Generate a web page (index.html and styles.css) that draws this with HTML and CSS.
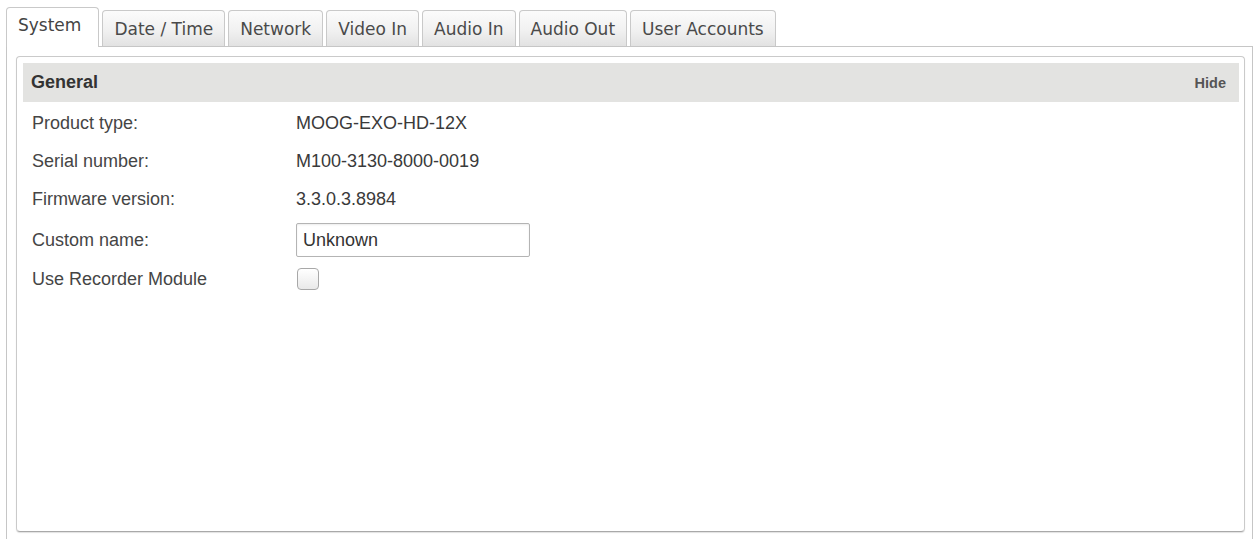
FILE: index.html
```html
<!DOCTYPE html>
<html lang="en">
<head>
  <meta charset="UTF-8" />
  <meta name="viewport" content="width=device-width, initial-scale=1.0" />
  <title>Device Settings - System</title>
  <link rel="stylesheet" href="styles.css">
</head>
<body>
  <div class="page">
    <ul class="tabs">
      <li class="tab active">System</li>
      <li class="tab">Date / Time</li>
      <li class="tab">Network</li>
      <li class="tab">Video In</li>
      <li class="tab">Audio In</li>
      <li class="tab">Audio Out</li>
      <li class="tab">User Accounts</li>
    </ul>

    <div class="panel">
      <div class="section">
        <div class="section-head">
          <span class="section-title">General</span>
          <span class="section-toggle">Hide</span>
        </div>

        <div class="rows">
          <div class="row">
            <span class="label">Product type:</span>
            <span class="value">MOOG-EXO-HD-12X</span>
          </div>
          <div class="row">
            <span class="label">Serial number:</span>
            <span class="value">M100-3130-8000-0019</span>
          </div>
          <div class="row">
            <span class="label">Firmware version:</span>
            <span class="value">3.3.0.3.8984</span>
          </div>
          <div class="row row-input">
            <span class="label">Custom name:</span>
            <input type="text" class="text-field" value="Unknown" />
          </div>
          <div class="row row-check">
            <span class="label">Use Recorder Module</span>
            <span class="check"></span>
          </div>
        </div>
      </div>
    </div>
  </div>
</body>
</html>
```

FILE: styles.css
```css
* {
  box-sizing: border-box;
}

html,
body {
  height: 100%;
  overflow: hidden;
}

body {
  margin: 0;
  background-color: #ffffff;
  font-family: "Liberation Sans", Arial, sans-serif;
  color: #333333;
}

.page {
  padding: 7px 6px 0 6px;
}

/* tab strip */
.tabs {
  display: flex;
  align-items: flex-end;
  gap: 3px;
  height: 39px;
  margin: 0;
  padding: 0;
  list-style: none;
  position: relative;
  z-index: 1;
}

.tab {
  height: 36px;
  padding: 0 11px;
  display: flex;
  align-items: center;
  border: 1px solid #c9c9c9;
  border-bottom: none;
  border-radius: 4px 4px 0 0;
  background: linear-gradient(#fbfbfb, #f1f1f1 55%, #e2e2e2);
  font-family: "DejaVu Sans", Verdana, sans-serif;
  font-size: 17px;
  color: #4a4a4a;
  white-space: nowrap;
}

.tab.active {
  height: 40px;
  margin-bottom: -1px;
  padding: 0 17px 6px 11px;
  background: #ffffff;
  color: #444444;
}

/* panel */
.panel {
  height: 493px;
  padding: 9px 7px 0 9px;
  border: 1px solid #c6c6c6;
  border-bottom: none;
}

.section {
  height: 476px;
  padding: 6px 5px 6px 6px;
  border: 1px solid #cacaca;
  border-bottom-color: #a9a9a9;
  border-radius: 4px;
  box-shadow: 0 1px 1px rgba(0, 0, 0, 0.12);
}

.section-head {
  height: 39px;
  display: flex;
  align-items: center;
  justify-content: space-between;
  padding: 0 13px 0 8px;
  background-color: #e3e3e1;
}

.section-title {
  font-size: 18px;
  font-weight: bold;
  color: #333333;
}

.section-toggle {
  font-size: 14.5px;
  font-weight: bold;
  color: #555555;
}

/* rows */
.rows {
  margin-top: 2px;
  padding-left: 9px;
}

.row {
  display: grid;
  grid-template-columns: 264px 1fr;
  align-items: center;
  height: 38px;
  font-size: 18px;
}

.row-input {
  height: 44px;
}

.row-check {
  height: 34px;
}

.label {
  color: #454545;
}

.value {
  color: #3a3a3a;
}

.text-field {
  width: 234px;
  height: 34px;
  padding: 0 6px;
  border: 1px solid #b4b4b4;
  border-radius: 2px;
  box-shadow: inset 0 1px 2px rgba(0, 0, 0, 0.08);
  font-family: "Liberation Sans", Arial, sans-serif;
  font-size: 18px;
  color: #333333;
}

.check {
  width: 22px;
  height: 22px;
  margin-left: 1px;
  border: 1px solid #a8a8a8;
  border-radius: 4px;
  background: linear-gradient(#ffffff, #e9e9e9);
}
```
